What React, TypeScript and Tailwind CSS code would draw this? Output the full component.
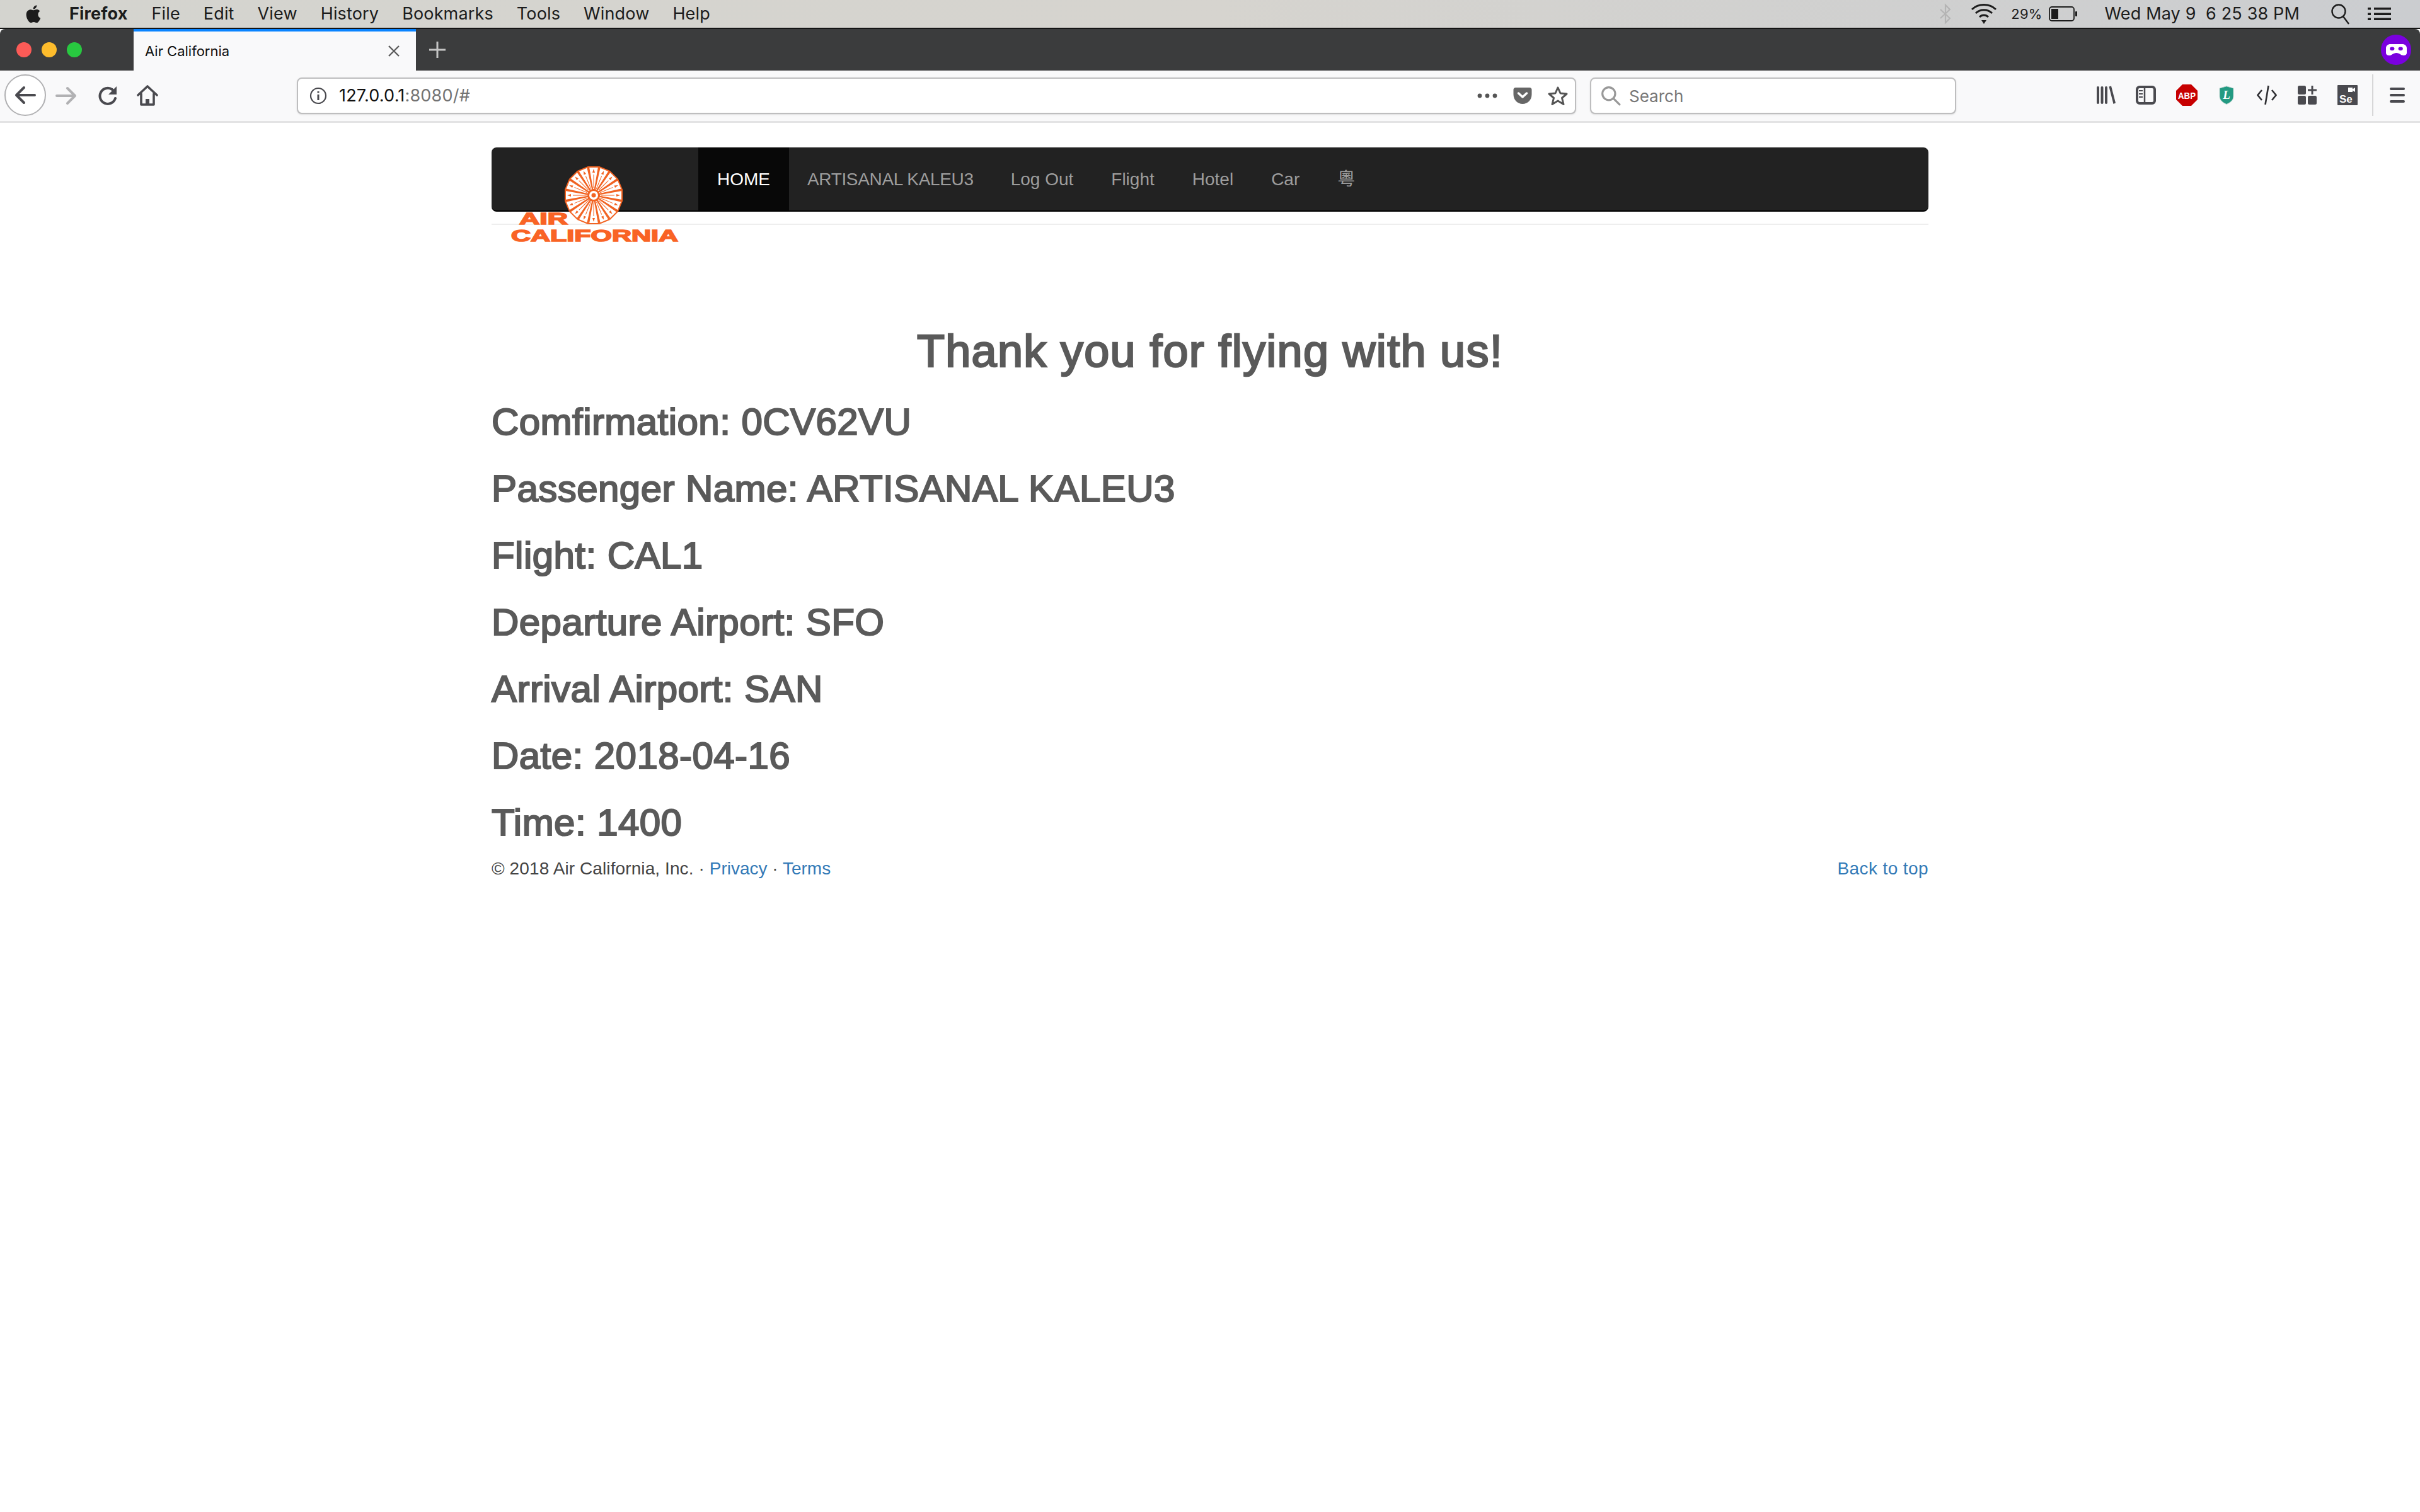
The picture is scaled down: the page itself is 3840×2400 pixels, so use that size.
const sans = 'font-["Liberation_Sans","Noto_Sans_CJK_TC",Arial,sans-serif]';
const ui = 'font-["Inter","Liberation_Sans",sans-serif]';

const details = [
  'Comfirmation: 0CV62VU',
  'Passenger Name: ARTISANAL KALEU3',
  'Flight: CAL1',
  'Departure Airport: SFO',
  'Arrival Airport: SAN',
  'Date: 2018-04-16',
  'Time: 1400',
];

const navLinks = ['Log Out', 'Flight', 'Hotel', 'Car', '粵'];
const menuItems = ['File', 'Edit', 'View', 'History', 'Bookmarks', 'Tools', 'Window', 'Help'];

function Logo() {
  const spokes = Array.from({ length: 16 }, (_, i) => i * 22.5);
  return (
    <svg width="290" height="136" viewBox="0 0 290 136" className="absolute left-[24px] top-[20px]">
      <g transform="translate(138 56)">
        {spokes.map((a) => (
          <g key={a} transform={`rotate(${a})`}>
            <path d="M-1.800 -9 L-8 -45 L8 -45 L1.800 -9 Z" fill="#fff" stroke="#f26322" strokeWidth="2" />
            <path d="M0 -11 L0 -33" stroke="#f26322" strokeWidth="1" />
            <path d="M-2 -36 L0 -42 L2 -36 Z" fill="#f26322" />
          </g>
        ))}
        <circle r="8" fill="#fff" stroke="#f26322" strokeWidth="2" />
        <circle r="3.500" fill="#f26322" />
      </g>
      <text x="20" y="102" textLength="77" lengthAdjust="spacingAndGlyphs" fontFamily="'Liberation Sans',sans-serif" fontWeight="700" fontSize="26" fill="#f96325" stroke="#f96325" strokeWidth="1.600">
        AIR
      </text>
      <text x="7" y="129" textLength="265" lengthAdjust="spacingAndGlyphs" fontFamily="'Liberation Sans',sans-serif" fontWeight="700" fontSize="26" fill="#f96325" stroke="#f96325" strokeWidth="1.600">
        CALIFORNIA
      </text>
    </svg>
  );
}

function MenuBar() {
  return (
    <div className={`flex h-[44px] items-center justify-between bg-gradient-to-r from-[#d4d4cf] via-[#d6d4cf] to-[#cbcdd0] pl-[40px] pr-[46px] text-[27px] tracking-[0.15px] text-[#1c1c1c] ${ui}`}>
      <div className="flex items-center">
        <svg width="28" height="32" viewBox="0 0 24 28" className="mr-[42px]">
          <path
            fill="#1c1c1c"
            d="M17.6 14.8c0-3 2.5-4.4 2.6-4.5-1.4-2.1-3.6-2.4-4.4-2.4-1.9-.2-3.7 1.1-4.6 1.1-1 0-2.4-1.1-4-1-2 0-3.9 1.2-5 3-2.1 3.7-.5 9.200 1.600 12.200 1 1.500 2.200 3.100 3.800 3.100 1.500-.1 2.100-1 4-1 1.800 0 2.400 1 4 1 1.700 0 2.700-1.500 3.700-3 1.200-1.700 1.700-3.400 1.700-3.500-.1 0-3.400-1.300-3.400-5zM14.500 5.700c.8-1 1.400-2.400 1.200-3.800-1.200.1-2.700.8-3.500 1.800-.8.900-1.500 2.300-1.300 3.700 1.400.1 2.800-.7 3.600-1.700z"
          />
        </svg>
        <span className="mr-[38px] font-bold">Firefox</span>
        <div className="flex gap-[37px]">
          {menuItems.map((m) => (
            <span key={m}>{m}</span>
          ))}
        </div>
      </div>
      <div className="flex items-center">
        <svg width="20" height="34" viewBox="0 0 20 34" fill="none" stroke="#b4b4b4" strokeWidth="2.200" className="mr-[30px]">
          <path d="M2 10 L17 24 L10 31 V3 L17 10 L2 24" />
        </svg>
        <svg width="42" height="36" viewBox="0 0 42 36" fill="none" stroke="#1c1c1c" strokeWidth="3" className="mr-[22px]">
          <path d="M2 11 C12 1 30 1 40 11 M8 17 C15 10 27 10 34 17 M14 23 C18 19 24 19 28 23" />
          <path d="M17 28 H25 L21 34 Z" fill="#1c1c1c" stroke="none" />
        </svg>
        <span className="mr-[11px] text-[22px]">29%</span>
        <svg width="46" height="26" viewBox="0 0 46 26" fill="none" className="mr-[42px]">
          <rect x="1" y="2" width="39" height="22" rx="4" stroke="#1c1c1c" strokeWidth="1.800" />
          <rect x="4" y="5" width="11" height="16" fill="#1c1c1c" />
          <rect x="42" y="9" width="3" height="8" rx="1" fill="#1c1c1c" />
        </svg>
        <span className="mr-[49px] whitespace-pre">Wed May 9  6 25 38 PM</span>
        <svg width="30" height="34" viewBox="0 0 30 34" fill="none" stroke="#1c1c1c" strokeWidth="2.400" className="mr-[29px]">
          <circle cx="13" cy="13" r="10.500" />
          <path d="M20 21 L29 33" />
        </svg>
        <svg width="37" height="20" viewBox="0 0 37 20" fill="#1c1c1c">
          <rect x="0" y="0" width="5" height="3.500" />
          <rect x="10" y="0" width="27" height="3.500" />
          <rect x="0" y="8.500" width="5" height="3.500" />
          <rect x="10" y="8.500" width="27" height="3.500" />
          <rect x="0" y="16.500" width="5" height="3.500" />
          <rect x="10" y="16.500" width="27" height="3.500" />
        </svg>
      </div>
    </div>
  );
}

function TabBar() {
  return (
    <div className={`flex h-[66px] items-stretch rounded-t-[8px] bg-[#3b3c3d] ${ui}`}>
      <div className="flex w-[212px] items-center gap-[16px] pl-[26px]">
        <span className="h-[24px] w-[24px] rounded-full bg-[#fc5b57]" />
        <span className="h-[24px] w-[24px] rounded-full bg-[#fdbc2c]" />
        <span className="h-[24px] w-[24px] rounded-full bg-[#28c840]" />
      </div>
      <div className="flex w-[448px] items-center justify-between border-t-[4px] border-[#0a84ff] bg-[#f9f9fa] pl-[18px] pr-[24px] text-[22px] text-[#111]">
        <span>Air California</span>
        <svg width="22" height="22" viewBox="0 0 22 22" stroke="#555" strokeWidth="2.200">
          <path d="M3 3 L19 19 M19 3 L3 19" />
        </svg>
      </div>
      <div className="flex items-center pl-[20px]">
        <svg width="28" height="28" viewBox="0 0 28 28" stroke="#c4c4c4" strokeWidth="3">
          <path d="M14 1 V27 M1 14 H27" />
        </svg>
      </div>
      <div className="ml-auto flex items-center pr-[14px]">
        <div className="flex h-[48px] w-[48px] items-center justify-center rounded-full bg-[#7a00df]">
          <svg width="33" height="18" viewBox="0 0 32 22" preserveAspectRatio="none">
            <path fill="#fff" d="M7 0 H25 C29 0 32 3 32 8 V17 C32 20 30 22 27 22 C23 22 21 17 16 17 C11 17 9 22 5 22 C2 22 0 20 0 17 V8 C0 3 3 0 7 0 Z" />
            <circle cx="9.500" cy="9" r="3.500" fill="#7a00df" />
            <circle cx="22.500" cy="9" r="3.500" fill="#7a00df" />
          </svg>
        </div>
      </div>
    </div>
  );
}

function Toolbar() {
  return (
    <div className={`flex h-[83px] items-start border-b-[3px] border-[#e3e3e4] bg-[#f9f9fa] pl-[7px] ${ui}`}>
      <div className="mt-[6px] flex h-[66px] w-[66px] items-center justify-center rounded-full border-[2px] border-[#b1b1b3] bg-white">
        <svg width="34" height="30" viewBox="0 0 34 30" fill="none" stroke="#4a4a4f" strokeWidth="4" strokeLinecap="round" strokeLinejoin="round">
          <path d="M32 15 H3 M15 3 L3 15 L15 27" />
        </svg>
      </div>
      <svg width="34" height="30" viewBox="0 0 34 30" fill="none" stroke="#b1b1b3" strokeWidth="4" strokeLinecap="round" strokeLinejoin="round" className="ml-[15px] mt-[25px]">
        <path d="M2 15 H31 M19 3 L31 15 L19 27" />
      </svg>
      <svg width="32" height="32" viewBox="0 0 32 32" fill="none" stroke="#4a4a4f" strokeWidth="4" className="ml-[33px] mt-[24px]">
        <path d="M28 20 A12.500 12.500 0 1 1 23 6 L28 10" strokeLinecap="round" />
        <path d="M30 1 V14 H17 Z" fill="#4a4a4f" stroke="none" />
      </svg>
      <svg width="34" height="34" viewBox="0 0 34 34" fill="none" stroke="#4a4a4f" strokeWidth="3.600" strokeLinejoin="round" className="ml-[30px] mt-[23px]">
        <path d="M2 16 L17 2 L32 16 M7 14 V31 H27 V14" strokeLinecap="round" />
        <path d="M14 31 V22 H20 V31 Z" fill="#4a4a4f" stroke="none" />
      </svg>
      <div className="ml-[220px] mt-[11px] flex h-[58px] w-[2030px] items-center rounded-[8px] border-[2px] border-[#bebebf] bg-white pl-[18px] pr-[11px] shadow-sm">
        <svg width="28" height="28" viewBox="0 0 28 28" fill="none" stroke="#4a4a4f" strokeWidth="2.200">
          <circle cx="14" cy="14" r="12" />
          <path d="M14 12 V21 M14 7 V9.500" strokeWidth="3" />
        </svg>
        <span className="ml-[19px] text-[27px] tracking-[0.2px] text-[#111]">
          127.0.0.1<span className="text-[#737373]">:8080/#</span>
        </span>
        <div className="ml-auto flex items-center gap-[24px]">
          <svg width="32" height="8" viewBox="0 0 32 8" fill="#555">
            <circle cx="4" cy="4" r="3.400" />
            <circle cx="16" cy="4" r="3.400" />
            <circle cx="28" cy="4" r="3.400" />
          </svg>
          <svg width="32" height="28" viewBox="0 0 30 28">
            <path fill="#666" d="M4 1 H26 C28 1 29.500 2.500 29.500 4.500 V12 C29.500 20.500 23 27 15 27 C7 27 .5 20.500 .5 12 V4.500 C.5 2.500 2 1 4 1 Z" />
            <path d="M8.500 10 L15 16 L21.500 10" fill="none" stroke="#fff" strokeWidth="3.500" strokeLinecap="round" strokeLinejoin="round" />
          </svg>
          <svg width="32" height="32" viewBox="0 0 32 32" fill="none" stroke="#555" strokeWidth="3" strokeLinejoin="round">
            <path d="M16 3 L20 12 L30 13 L22.500 19.500 L25 29.500 L16 24 L7 29.500 L9.500 19.500 L2 13 L12 12 Z" />
          </svg>
        </div>
      </div>
      <div className="ml-[22px] mt-[11px] flex h-[58px] w-[581px] items-center rounded-[8px] border-[2px] border-[#bebebf] bg-white pl-[15px] shadow-sm">
        <svg width="32" height="32" viewBox="0 0 30 30" fill="none" stroke="#999" strokeWidth="3">
          <circle cx="12" cy="12" r="9.500" />
          <path d="M19 19 L28 28" strokeLinecap="round" />
        </svg>
        <span className="ml-[13px] text-[26px] text-[#777]">Search</span>
      </div>
      <div className="ml-[223px] mt-[6px] flex items-center">
        <svg width="30" height="30" viewBox="0 0 30 30" fill="#4a4a4f">
          <rect x="0" y="1" width="4" height="28" rx="2" />
          <rect x="6.500" y="1" width="4" height="28" rx="2" />
          <rect x="13" y="1" width="4" height="28" rx="2" />
          <path d="M19.500 1.500 L23 .5 L30 27.500 L26.500 29 Z" />
        </svg>
        <svg width="32" height="30" viewBox="0 0 32 30" fill="none" stroke="#4a4a4f" strokeWidth="4" className="ml-[32px]">
          <rect x="2" y="2" width="28" height="26" rx="4" />
          <path d="M14 2 V28" strokeWidth="2.500" />
          <path d="M5 8 H11 M5 13 H11 M5 18 H11" strokeWidth="2.200" />
        </svg>
        <svg width="34" height="34" viewBox="0 0 34 34" className="ml-[32px]">
          <path fill="#c70000" d="M10 0 H24 L34 10 V24 L24 34 H10 L0 24 V10 Z" />
          <text x="17" y="23" textAnchor="middle" fontFamily="'Liberation Sans',sans-serif" fontWeight="700" fontSize="15" fill="#fff" textLength="28" lengthAdjust="spacingAndGlyphs">
            ABP
          </text>
        </svg>
        <svg width="24" height="30" viewBox="0 0 24 30" className="ml-[34px]">
          <path fill="#239a82" stroke="#c8d8d4" strokeWidth="1" d="M12 .8 L23 4 V17 C23 23 18 27 12 29.500 C6 27 1 23 1 17 V4 Z" />
          <text x="12" y="21" textAnchor="middle" fontFamily="'Liberation Serif',serif" fontStyle="italic" fontWeight="700" fontSize="19" fill="#fff">
            L
          </text>
        </svg>
        <svg width="32" height="32" viewBox="0 0 32 32" fill="none" stroke="#2f2f33" strokeWidth="2.600" className="ml-[36px]">
          <path d="M8 8 L1.500 16 L8 24 M24 8 L30.500 16 L24 24" />
          <path d="M18.500 1 L13.500 31" />
        </svg>
        <svg width="30" height="30" viewBox="0 0 30 30" fill="#4a4a4f" className="ml-[33px]">
          <rect x="0" y="0" width="13" height="14" rx="2.500" />
          <rect x="0" y="16" width="13" height="14" rx="2.500" />
          <rect x="16" y="16" width="14" height="14" rx="2.500" />
          <path d="M21.500 0 H24.500 V5.500 H30 V8.500 H24.500 V14 H21.500 V8.500 H16 V5.500 H21.500 Z" />
        </svg>
        <svg width="32" height="32" viewBox="0 0 32 32" className="ml-[33px]">
          <rect width="32" height="32" rx="1" fill="#4a4a4f" />
          <path fill="#fff" d="M17 4 H24 V6.500 L28 4 V11 L24 8.500 V11 H17 Z" />
          <text x="3" y="28" fontFamily="'Liberation Sans',sans-serif" fontWeight="700" fontSize="17" fill="#fff">
            Se
          </text>
        </svg>
        <div className="ml-[23px] h-[66px] w-[2px] bg-[#d7d7d8]" />
        <svg width="24" height="24" viewBox="0 0 24 24" fill="#4a4a4f" className="ml-[26px]">
          <rect x="0" y="0" width="24" height="4" rx="2" />
          <rect x="0" y="10" width="24" height="4" rx="2" />
          <rect x="0" y="20" width="24" height="4" rx="2" />
        </svg>
      </div>
    </div>
  );
}

function Navbar() {
  return (
    <div className="relative flex h-[102px] rounded-[8px] border-b-[2px] border-black bg-[#222] text-[28px] text-[#9d9d9d]">
      <Logo />
      <div className="ml-[328px] flex">
        <a className="flex items-center bg-[#080808] px-[30px] pt-[2px] text-white">HOME</a>
        <a className="flex items-center px-[29px] pt-[2px] tracking-[-0.35px]">ARTISANAL KALEU3</a>
        {navLinks.map((l) => (
          <a key={l} className="flex items-center px-[30px] pt-[2px]">
            {l}
          </a>
        ))}
      </div>
    </div>
  );
}

export default function App() {
  return (
    <div className={`min-h-[2400px] w-[3840px] bg-white ${sans}`}>
      <MenuBar />
      <div className="h-[2px] bg-[#141414]" />
      <TabBar />
      <Toolbar />
      <div className="mx-auto w-[2280px] pt-[39px]">
        <Navbar />
        <div className="mt-[19px] h-[2px] bg-[#eee]" />
        <h1 className="mt-[161px] text-center text-[72px] leading-[79px] tracking-[1.3px] text-[#5a5a5a] [-webkit-text-stroke:2.6px_#5a5a5a]">
          Thank you for flying with us!
        </h1>
        {details.map((d) => (
          <h2 key={d} className="mt-[40px] text-[60px] leading-[66px] tracking-[0.45px] text-[#5a5a5a] [-webkit-text-stroke:2.2px_#5a5a5a]">
            {d}
          </h2>
        ))}
        <div className="mt-[20px] flex justify-between text-[28px] leading-[40px] text-[#444]">
          <p>
            <span className="tracking-[0.1px]">© 2018 Air California, Inc. · </span>
            <a className="text-[#337ab7]">Privacy</a> · <a className="text-[#337ab7]">Terms</a>
          </p>
          <a className="tracking-[0.4px] text-[#337ab7]">Back to top</a>
        </div>
      </div>
    </div>
  );
}
